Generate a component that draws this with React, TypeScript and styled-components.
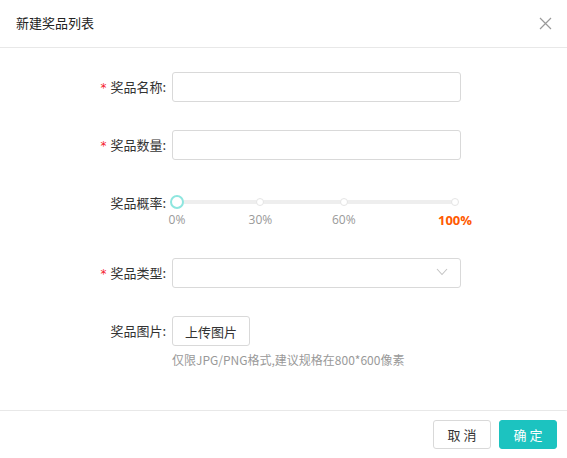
import React, { useState } from 'react';
import styled, { createGlobalStyle } from 'styled-components';

const FONT = `"Noto Sans CJK SC", "Noto Sans", "Liberation Sans", sans-serif`;

const GlobalStyle = createGlobalStyle`
  html, body {
    margin: 0;
    padding: 0;
    background: #fff;
  }
  * {
    box-sizing: border-box;
  }
`;

type Mark = {
  value: number;
  label: string;
  strong?: boolean;
};

const MARKS: Mark[] = [
  { value: 0, label: '0%' },
  { value: 30, label: '30%' },
  { value: 60, label: '60%' },
  { value: 100, label: '100%', strong: true }
];

const App = () => {
  const [name, setName] = useState('');
  const [count, setCount] = useState('');

  return (
    <>
      <GlobalStyle />
      <Modal>
        <Header>
          <Title>新建奖品列表</Title>
          <CloseBtn aria-label="close">
            <svg width="13" height="13" viewBox="0 0 13 13">
              <path d="M1 1 L12 12 M12 1 L1 12" stroke="#9a9a9a" strokeWidth="1.2" fill="none" />
            </svg>
          </CloseBtn>
        </Header>
        <Body>
          <Row>
            <Label required>奖品名称:</Label>
            <Input value={name} onChange={(e) => setName(e.target.value)} />
          </Row>
          <Row>
            <Label required>奖品数量:</Label>
            <Input value={count} onChange={(e) => setCount(e.target.value)} />
          </Row>
          <SliderRow>
            <Label>奖品概率:</Label>
            <Slider>
              <Track />
              {MARKS.map((mark) => (
                <Dot key={mark.value} style={{ left: `${mark.value}%` }} />
              ))}
              <Handle />
              {MARKS.map((mark) => (
                <MarkText
                  key={mark.label}
                  strong={mark.strong}
                  style={{ left: `${mark.value}%` }}
                >
                  {mark.label}
                </MarkText>
              ))}
            </Slider>
          </SliderRow>
          <Row>
            <Label required>奖品类型:</Label>
            <Select>
              <svg width="12" height="8" viewBox="0 0 12 8">
                <path d="M1 1 L6 6.5 L11 1" stroke="#c4c4c4" strokeWidth="1.1" fill="none" />
              </svg>
            </Select>
          </Row>
          <UploadRow>
            <Label>奖品图片:</Label>
            <UploadCol>
              <UploadBtn>上传图片</UploadBtn>
              <Hint>仅限JPG/PNG格式,建议规格在800*600像素</Hint>
            </UploadCol>
          </UploadRow>
        </Body>
        <Footer>
          <Button>取 消</Button>
          <Button primary>确 定</Button>
        </Footer>
      </Modal>
    </>
  );
};

export default App;

const Modal = styled.div`
  width: 567px;
  height: 458px;
  background: #fff;
  font-family: ${FONT};
  color: #333;
  display: flex;
  flex-direction: column;
`;
const Header = styled.div`
  height: 48px;
  display: flex;
  align-items: center;
  justify-content: space-between;
  padding: 0 15px 2px 16px;
  border-bottom: 1px solid #e8e8e8;
`;
const Title = styled.div`
  font-size: 13px;
  color: #222;
`;
const CloseBtn = styled.button`
  border: none;
  background: none;
  padding: 0;
  display: flex;
  cursor: pointer;
  margin-top: 1px;
`;
const Body = styled.div`
  flex: 1;
  padding-top: 24px;
  display: flex;
  flex-direction: column;
  gap: 28px;
`;
const Row = styled.div`
  display: flex;
  align-items: center;
  height: 30px;
`;
const SliderRow = styled.div`
  display: flex;
  align-items: flex-start;
  height: 42px;
`;
const UploadRow = styled.div`
  display: flex;
  align-items: flex-start;
`;
const Label = styled.div<{ required?: boolean }>`
  width: 166px;
  flex-shrink: 0;
  text-align: right;
  font-size: 13px;
  color: #333;
  line-height: 30px;
  margin-right: 6px;
  &::before {
    content: ${(props) => (props.required ? "'*'" : "''")};
    color: #f5222d;
    font-family: "DejaVu Sans", sans-serif;
    font-size: 12px;
    margin-right: 4px;
  }
`;
const Input = styled.input`
  width: 289px;
  height: 30px;
  border: 1px solid #d9d9d9;
  border-radius: 3px;
  outline: none;
  padding: 0 8px;
  font-family: ${FONT};
  font-size: 13px;
`;
const Select = styled.div`
  width: 289px;
  height: 30px;
  border: 1px solid #d9d9d9;
  border-radius: 3px;
  display: flex;
  align-items: center;
  justify-content: flex-end;
  padding-right: 12px;
  padding-bottom: 2px;
`;
const Slider = styled.div`
  position: relative;
  width: 278px;
  height: 42px;
  margin-left: 5px;
`;
const Track = styled.div`
  position: absolute;
  left: 0;
  right: 0;
  top: 14px;
  height: 4px;
  border-radius: 2px;
  background: #eeeeee;
  transform: translateY(-50%);
`;
const Dot = styled.div`
  position: absolute;
  top: 14px;
  width: 8px;
  height: 8px;
  border-radius: 50%;
  border: 1px solid #e5e5e5;
  background: #fff;
  transform: translate(-50%, -50%);
`;
const Handle = styled.div`
  position: absolute;
  left: 0;
  top: 14px;
  width: 14px;
  height: 14px;
  border-radius: 50%;
  border: 2px solid #8ee6df;
  background: #fff;
  transform: translate(-50%, -50%);
`;
const MarkText = styled.span<{ strong?: boolean }>`
  position: absolute;
  top: 23px;
  transform: translateX(-50%);
  white-space: nowrap;
  line-height: 18px;
  font-size: ${(props) => (props.strong ? '13px' : '12px')};
  font-weight: ${(props) => (props.strong ? 700 : 400)};
  color: ${(props) => (props.strong ? '#ff5a00' : '#999')};
  font-family: "Open Sans", "Noto Sans", sans-serif;
`;
const UploadCol = styled.div`
  display: flex;
  flex-direction: column;
  align-items: flex-start;
  gap: 4px;
`;
const UploadBtn = styled.button`
  height: 30px;
  width: 78px;
  border: 1px solid #d9d9d9;
  border-radius: 3px;
  background: #fff;
  font-family: ${FONT};
  font-size: 13px;
  color: #333;
  cursor: pointer;
`;
const Hint = styled.div`
  font-size: 12px;
  color: #999;
  line-height: 20px;
`;
const Footer = styled.div`
  height: 48px;
  border-top: 1px solid #e8e8e8;
  display: flex;
  align-items: center;
  justify-content: flex-end;
  gap: 8px;
  padding: 0 10px 0 0;
`;
const Button = styled.button<{ primary?: boolean }>`
  width: 58px;
  height: 29px;
  border-radius: 3px;
  font-family: ${FONT};
  font-size: 13px;
  cursor: pointer;
  border: 1px solid ${(props) => (props.primary ? '#1cc3c0' : '#d9d9d9')};
  background: ${(props) => (props.primary ? '#1cc3c0' : '#fff')};
  color: ${(props) => (props.primary ? '#fff' : '#333')};
`;
